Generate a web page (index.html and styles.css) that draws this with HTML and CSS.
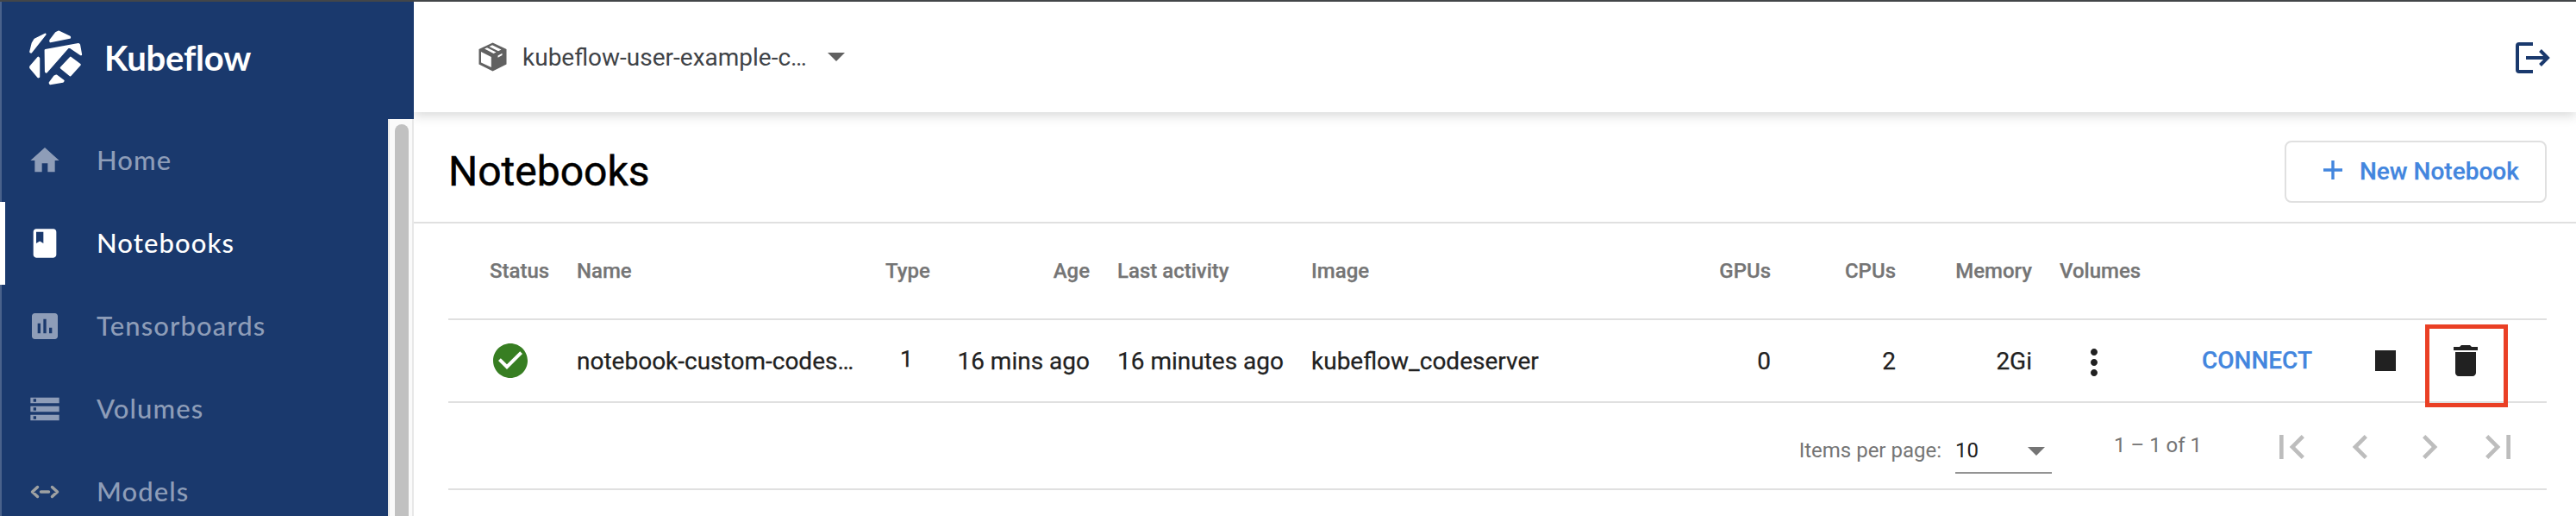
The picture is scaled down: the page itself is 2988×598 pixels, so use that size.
FILE: index.html
```html
<!DOCTYPE html>
<html lang="en">
<head>
<meta charset="utf-8">
<title>Kubeflow Notebooks</title>
<link rel="stylesheet" href="styles.css">
</head>
<body>
<div class="app">
  <aside class="sidebar">
    <div class="brand">
      <svg class="brand-logo" viewBox="96 98 200 200">
        <path d="M157 118 121 136 113 150 106 179 108 180zM203 109 242 127 242 130 175 143 175 139 195 113zM158 173 272 152 275 155 281 188 239 160 161 249 159 247zM106 230 133 199 135 201 135 265 133 266 106 234zM245 199 277 223 244 260 212 234zM196 261 220 279 218 282 174 289 173 286 189 264z"/>
      </svg>
      <span class="brand-name">Kubeflow</span>
    </div>
    <div class="sidebar-body">
      <nav class="menu">
        <a class="item">
          <svg class="item-icon" viewBox="0 0 24 24"><path d="M10 20v-6h4v6h5v-8h3L12 3 2 12h3v8z"/></svg>
          <span class="item-label">Home</span>
        </a>
        <a class="item active">
          <svg class="item-icon" viewBox="0 0 24 24"><path d="M18 2H6c-1.1 0-2 .9-2 2v16c0 1.100.9 2 2 2h12c1.100 0 2-.9 2-2V4c0-1.100-.9-2-2-2zM6 4h5v8l-2.500-1.500L6 12V4z"/></svg>
          <span class="item-label">Notebooks</span>
        </a>
        <a class="item">
          <svg class="item-icon" viewBox="0 0 24 24"><path d="M19 3H5c-1.100 0-2 .9-2 2v14c0 1.100.9 2 2 2h14c1.100 0 2-.9 2-2V5c0-1.100-.9-2-2-2zM9 17H7v-7h2v7zm4 0h-2V7h2v10zm4 0h-2v-4h2v4z"/></svg>
          <span class="item-label">Tensorboards</span>
        </a>
        <a class="item">
          <svg class="item-icon" viewBox="0 0 24 24"><path d="M2 20h20v-4H2v4zm2-3h2v2H4v-2zM2 4v4h20V4H2zm4 3H4V5h2v2zm-4 7h20v-4H2v4zm2-3h2v2H4v-2z"/></svg>
          <span class="item-label">Volumes</span>
        </a>
        <a class="item">
          <svg class="item-icon models" viewBox="0 0 40 40"><path d="M11.500 14.500 5.500 20l6 5.500M15.500 20h9M28.500 14.500l6 5.500-6 5.500"/></svg>
          <span class="item-label">Models</span>
        </a>
      </nav>
      <div class="scrollbar"><div class="thumb"></div></div>
    </div>
  </aside>

  <main class="main">
    <header class="topbar">
      <div class="namespace">
        <svg class="package" viewBox="0 0 33 34">
          <path class="box" d="M16.500.5 32.500 8v17.500L16.500 33.500.5 25.500V8z"/>
          <path class="gap" d="M3 11 14.800 17v12L3 23.600zM7 7.600 10 6.200 20.500 11.600 17.500 13zM12.500 4.900 16 3.300 26.500 8.500 23 10.200zM22.500 15.500 27.500 12.800V15L22.500 17.700z"/>
        </svg>
        <span class="namespace-name">kubeflow-user-example-c…</span>
        <svg class="caret" viewBox="0 0 20 10"><path d="M0 0h20L10 10z"/></svg>
      </div>
      <svg class="logout" viewBox="0 0 40 36"><path d="M20 2H4a2 2 0 0 0-2 2v28a2 2 0 0 0 2 2h16M12 18h25M28.500 9.500 37 18l-8.500 8.500"/></svg>
    </header>

    <div class="title-bar">
      <h1 class="title">Notebooks</h1>
      <button class="new-button">
        <svg class="plus" viewBox="0 0 22 22"><path d="M11 0v22M0 11h22"/></svg>
        <span>New Notebook</span>
      </button>
    </div>

    <section class="table">
      <div class="row head">
        <span>Status</span>
        <span>Name</span>
        <span>Type</span>
        <span class="num">Age</span>
        <span class="activity">Last activity</span>
        <span>Image</span>
        <span class="num">GPUs</span>
        <span class="num">CPUs</span>
        <span class="num">Memory</span>
        <span class="volumes">Volumes</span>
      </div>
      <div class="row">
        <svg class="status" viewBox="0 0 24 24"><path d="M12 2C6.480 2 2 6.480 2 12s4.480 10 10 10 10-4.480 10-10S17.520 2 12 2zm-2 15l-5-5 1.410-1.410L10 14.170l7.590-7.590L19 8l-9 9z"/></svg>
        <span>notebook-custom-codes…</span>
        <span class="type">1</span>
        <span class="num">16 mins ago</span>
        <span class="activity">16 minutes ago</span>
        <span>kubeflow_codeserver</span>
        <span class="num">0</span>
        <span class="num">2</span>
        <span class="num">2Gi</span>
        <svg class="more" viewBox="0 0 24 24"><path d="M12 8c1.100 0 2-.9 2-2s-.9-2-2-2-2 .9-2 2 .9 2 2 2zm0 2c-1.100 0-2 .9-2 2s.9 2 2 2 2-.9 2-2-.9-2-2-2zm0 6c-1.100 0-2 .9-2 2s.9 2 2 2 2-.9 2-2-.9-2-2-2z"/></svg>
        <span class="connect">CONNECT</span>
        <svg class="action" viewBox="0 0 24 24"><path d="M6 6h12v12H6z"/></svg>
        <span class="highlight">
          <svg class="action" viewBox="0 0 24 24"><path d="M6 19c0 1.100.9 2 2 2h8c1.100 0 2-.9 2-2V7H6v12zM19 4h-3.500l-1-1h-5l-1 1H5v2h14V4z"/></svg>
        </span>
      </div>
      <div class="pager">
        <span class="per-page">Items per page:</span>
        <div class="select">
          <span>10</span>
          <svg class="caret" viewBox="0 0 20 10"><path d="M0 0h20L10 10z"/></svg>
        </div>
        <span class="range">1 – 1 of 1</span>
        <div class="nav-buttons">
          <svg viewBox="0 0 24 24"><path d="M18.410 16.590L13.820 12l4.590-4.590L17 6l-6 6 6 6zM6 6h2v12H6z"/></svg>
          <svg viewBox="0 0 24 24"><path d="M15.410 7.410L14 6l-6 6 6 6 1.410-1.410L10.830 12z"/></svg>
          <svg viewBox="0 0 24 24"><path d="M10 6L8.590 7.410 13.170 12l-4.580 4.590L10 18l6-6z"/></svg>
          <svg viewBox="0 0 24 24"><path d="M5.590 7.410L10.180 12l-4.590 4.590L7 18l6-6-6-6zM16 6h2v12h-2z"/></svg>
        </div>
      </div>
    </section>
  </main>
</div>
</body>
</html>
```
FILE: styles.css
```css
* { box-sizing: border-box; }

body {
  margin: 0;
  background: #fff;
  color: #212121;
  font: 28px Roboto, sans-serif;
  -webkit-text-stroke: 0.25px;
}

svg { display: block; flex: none; fill: currentColor; }

.app {
  display: flex;
  height: 598px;
  overflow: hidden;
  border-top: 2px solid #434649;
}

/* Sidebar */
.sidebar {
  flex: none;
  display: flex;
  flex-direction: column;
  width: 480px;
  background: linear-gradient(90deg, #4a628b 2px, #1a396d 2px);
  font-family: Lato, sans-serif;
  -webkit-text-stroke: 0;
}

.brand {
  flex: none;
  display: flex;
  align-items: center;
  height: 136px;
  padding: 0 0 7px 32px;
  color: #fff;
}

.brand-logo {
  width: 67px;
  height: 67px;
  stroke: #fff;
  stroke-width: 7;
  stroke-linejoin: round;
}

.brand-name {
  margin-left: 22px;
  font-size: 40px;
  font-weight: 700;
  letter-spacing: -0.2px;
}

.sidebar-body { flex: 1; display: flex; min-height: 0; }

.menu { flex: 1; }

.item {
  display: flex;
  align-items: center;
  height: 96px;
  padding-left: 32px;
  color: #8e9db8;
}

.item.active {
  padding-left: 26px;
  border-left: 6px solid #fff;
  color: #fff;
}

.item-icon { width: 40px; height: 40px; }

.item-icon.models {
  fill: none;
  stroke: #9ea1a2;
  stroke-width: 3.5;
  stroke-linecap: round;
  stroke-linejoin: round;
}

.item-label {
  margin-left: 40px;
  padding-bottom: 2px;
  font-size: 31px;
  font-weight: 500;
  letter-spacing: 1.1px;
}

.scrollbar {
  width: 30px;
  padding: 6px 0 0 6px;
  border: solid #e8e8e8;
  border-width: 0 2px;
  background: #fafafa;
}

.thumb {
  width: 16px;
  height: 600px;
  border-radius: 8px;
  background: #c1c1c1;
}

/* Top bar */
.main { flex: 1; min-width: 0; }

.topbar {
  display: flex;
  align-items: center;
  justify-content: space-between;
  height: 128px;
  padding: 0 30px 0 75px;
  box-shadow: 0 4px 12px rgba(60, 64, 67, 0.2);
  clip-path: inset(0 0 -30px 0);
}

.namespace {
  display: flex;
  align-items: center;
  color: #616161;
  -webkit-text-stroke: 0;
}

.package { width: 33px; height: 34px; }

.package .gap { fill: #fff; }

.namespace-name { margin: 0 24px 0 18px; color: #3f4347; }

.caret { width: 20px; height: 10px; }

.logout {
  width: 40px;
  height: 36px;
  margin-top: 2px;
  fill: none;
  stroke: #1a396d;
  stroke-width: 4;
}

/* Page title */
.title-bar {
  display: flex;
  align-items: center;
  justify-content: space-between;
  height: 129px;
  padding: 11px 34px 0 40px;
  border-bottom: 2px solid #e0e0e0;
}

.title {
  margin: 0 0 2px;
  color: #000;
  font-size: 48px;
  font-weight: 400;
  -webkit-text-stroke: 0.5px;
}

.new-button {
  display: flex;
  align-items: center;
  width: 304px;
  height: 72px;
  padding: 0 0 2px 43px;
  border: 2px solid #e0e0e0;
  border-radius: 8px;
  background: #fff;
  color: #4386de;
  font: 500 28px Roboto, sans-serif;
}

.plus {
  width: 22px;
  height: 22px;
  margin: 0 20px 2px 0;
  stroke: currentColor;
  stroke-width: 3.4;
}

/* Notebook table */
.table { padding: 0 34px 0 40px; }

.row {
  display: grid;
  grid-template-columns: 101px 358px 60px 177px 257px 377px 156px 145px 158px 197px 188px 71px 96px;
  grid-template-rows: 94px;
  align-items: center;
  height: 96px;
  padding-left: 48px;
  border-bottom: 2px solid #e0e0e0;
  white-space: nowrap;
}

.row.head {
  grid-template-rows: 110px;
  height: 112px;
  color: #757575;
  font-size: 24px;
  font-weight: 500;
}

.num { text-align: right; }

.activity { padding-left: 32px; }

.volumes { padding-left: 32px; }

.type { padding: 0 0 4px 17px; font-size: 26.67px; }

.status { width: 48px; height: 48px; color: #377e22; }

.more { width: 48px; height: 48px; margin: 4px 0 0 48px; }

.connect { padding-bottom: 2px; color: #4386de; font-weight: 500; }

.action { width: 48px; height: 48px; }

.row > .action { width: 50px; }

.highlight {
  position: relative;
  top: 6px;
  display: flex;
  align-items: center;
  justify-content: center;
  width: 96px;
  height: 96px;
  border: 5px solid #ea4025;
}

.highlight .action { position: relative; top: -6px; left: -1.5px; }

/* Paginator */
.pager {
  display: flex;
  align-items: flex-start;
  justify-content: flex-end;
  height: 101px;
  padding-right: 28px;
  border-bottom: 2px solid #e0e0e0;
  color: #757575;
  font-size: 24px;
  line-height: 28px;
  -webkit-text-stroke: 0;
}

.per-page { margin: 41px 16px 0 0; }

.select {
  display: flex;
  justify-content: space-between;
  width: 112px;
  height: 41px;
  margin-top: 41px;
  padding-right: 8px;
  border-bottom: 2px solid #949494;
  color: #212121;
}

.select .caret { margin-top: 10px; color: #757575; }

.range { width: 102px; margin: 35px 76px 0 72px; white-space: nowrap; }

.nav-buttons { display: flex; gap: 24px; margin-top: 23px; color: #bdbdbd; }

.nav-buttons svg { width: 56px; height: 56px; }
```
